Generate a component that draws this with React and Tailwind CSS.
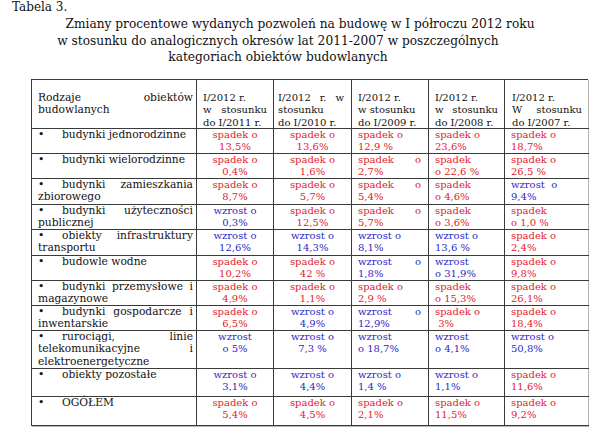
import React from "react";

const R = "text-[#e2222b]";
const B = "text-[#2a2ac8]";

function Lines({ lines, align = "left" }) {
  return (
    <div className={align === "center" ? "text-center" : "text-left"}>
      {lines.map((l, i) => {
        if (typeof l === "object" && l.j) {
          const words = l.t.split(" ");
          return (
            <div key={i} className="flex justify-between whitespace-pre">
              {words.map((w, k) => (
                <span key={k}>{w}</span>
              ))}
            </div>
          );
        }
        return (
          <div key={i} className="whitespace-pre">
            {l}
          </div>
        );
      })}
    </div>
  );
}

function NameCell({ first, rest = [], justify = false }) {
  return (
    <div className="pl-[6px] pr-[3px] border-r border-b border-[#3a3a3a] text-[#111] text-[10.7px]">
      <div className="flex">
        <span className="w-[24px] shrink-0">•</span>
        {justify ? (
          <span className="flex-1 flex justify-between">
            {first.split(" ").map((w, k) => (
              <span key={k}>{w}</span>
            ))}
          </span>
        ) : (
          <span className="whitespace-pre">{first}</span>
        )}
      </div>
      {rest.map((r, i) =>
        typeof r === "object" ? (
          <div key={i} className="flex justify-between">
            {r.t.split(" ").map((w, k) => (
              <span key={k}>{w}</span>
            ))}
          </div>
        ) : (
          <div key={i}>{r}</div>
        )
      )}
    </div>
  );
}

function Cell({ c, lines, align = "left", last = false }) {
  return (
    <div
      className={`border-b border-[#3a3a3a] ${last ? "" : "border-r"} ${
        align === "center" ? "px-[2px]" : "pl-[6px] pr-[7px]"
      } ${c}`}
    >
      <Lines lines={lines} align={align} />
    </div>
  );
}

const rows = [
  {
    name: { first: "budynki jednorodzinne" },
    cells: [
      [R, ["spadek o", "13,5%"]],
      [R, ["spadek o", "13,6%"]],
      [R, ["spadek o", "12,9 %"]],
      [R, ["spadek o", "23,6%"]],
      [R, ["spadek o", "18,7%"]],
    ],
  },
  {
    name: { first: "budynki wielorodzinne" },
    cells: [
      [R, ["spadek o", "0,4%"]],
      [R, ["spadek o", "1,6%"]],
      [R, [{ j: true, t: "spadek o" }, "2,7%"]],
      [R, ["spadek", "o 22,6 %"]],
      [R, ["spadek o", "26,5 %"]],
    ],
  },
  {
    name: { first: "budynki zamieszkania", rest: ["zbiorowego"], justify: true },
    cells: [
      [R, ["spadek o", "8,7%"]],
      [R, ["spadek o", "5,7%"]],
      [R, [{ j: true, t: "spadek o" }, "5,4%"]],
      [R, ["spadek", "o 4,6%"]],
      [B, ["wzrost  o", "9,4%"]],
    ],
  },
  {
    name: { first: "budynki użyteczności", rest: ["publicznej"], justify: true },
    cells: [
      [B, ["wzrost o", "0,3%"]],
      [R, ["spadek o", "12,5%"]],
      [R, [{ j: true, t: "spadek o" }, "5,7%"]],
      [R, ["spadek", "o 3,6%"]],
      [R, ["spadek", "o 1,0 %"]],
    ],
  },
  {
    name: { first: "obiekty infrastruktury", rest: ["transportu"], justify: true },
    cells: [
      [B, ["wzrost o", "12,6%"]],
      [B, ["wzrost o", "14,3%"]],
      [B, ["wzrost o", "8,1%"]],
      [B, ["wzrost o", "13,6 %"]],
      [R, ["spadek o", "2,4%"]],
    ],
  },
  {
    name: { first: "budowle wodne" },
    cells: [
      [R, ["spadek o", "10,2%"]],
      [R, ["spadek o", "42 %"]],
      [B, [{ j: true, t: "wzrost o" }, "1,8%"]],
      [B, ["wzrost", "o 31,9%"]],
      [R, ["spadek o", "9,8%"]],
    ],
  },
  {
    name: { first: "budynki przemysłowe i", rest: ["magazynowe"], justify: true },
    cells: [
      [R, ["spadek o", "4,9%"]],
      [R, ["spadek o", "1,1%"]],
      [R, ["spadek o", "2,9 %"]],
      [R, ["spadek", "o 15,3%"]],
      [R, ["spadek o", "26,1%"]],
    ],
  },
  {
    name: { first: "budynki gospodarcze i", rest: ["inwentarskie"], justify: true },
    cells: [
      [R, ["spadek o", "6,5%"]],
      [B, ["wzrost o", "4,9%"]],
      [B, [{ j: true, t: "wzrost o" }, "12,9%"]],
      [R, ["spadek o", " 3%"]],
      [R, ["spadek o", "18,4%"]],
    ],
  },
  {
    name: {
      first: "rurociągi, linie",
      rest: [{ t: "telekomunikacyjne i" }, "elektroenergetyczne"],
      justify: true,
    },
    cells: [
      [B, ["wzrost", "o 5%"]],
      [B, ["wzrost o", "7,3 %"]],
      [B, ["wzrost", "o 18,7%"]],
      [B, ["wzrost", "o 4,1%"]],
      [B, ["wzrost o", "50,8%"]],
    ],
  },
  {
    name: { first: "obiekty pozostałe" },
    cells: [
      [B, ["wzrost o", "3,1%"]],
      [B, ["wzrost o", "4,4%"]],
      [B, ["wzrost o", "1,4 %"]],
      [B, ["wzrost o", "1,1%"]],
      [R, ["spadek o", "11,6%"]],
    ],
  },
  {
    name: { first: "OGÓŁEM" },
    cells: [
      [R, ["spadek o", "5,4%"]],
      [R, ["spadek o", "4,5%"]],
      [R, ["spadek o", "2,1%"]],
      [R, ["spadek o", "11,5%"]],
      [R, ["spadek o", "9,2%"]],
    ],
  },
];

export default function App() {
  return (
    <div
      className="w-[600px] h-[436px] bg-white text-[#111] overflow-hidden"
      style={{ fontFamily: '"DejaVu Serif", serif' }}
    >
      <div className="pl-[12px] text-[12px] leading-[14px]">Tabela 3.</div>
      <div className="w-[556px] text-center text-[12.2px] leading-[16.5px] mt-[2px]">
        <div className="pl-[44px]">
          Zmiany procentowe wydanych pozwoleń na budowę w I półroczu 2012 roku
        </div>
        <div>w stosunku do analogicznych okresów lat 2011-2007 w poszczególnych</div>
        <div>kategoriach obiektów budowlanych</div>
      </div>
      <div className="ml-[31px] mt-[13px] w-[557px] border-l border-t border-[#3a3a3a] shadow-[1px_1px_0_#b5b5b5] grid grid-cols-[165px_77px_78px_77px_76px_84px] grid-rows-[49px_25px_25px_26px_25px_26px_25px_25px_25px_38px_28px_29px] text-[10px] leading-[12.5px]">
        <div className="pl-[6px] pr-[3px] pt-[12px] border-r border-b border-[#3a3a3a] text-[10.7px]">
          <Lines lines={[{ j: true, t: "Rodzaje obiektów" }, "budowlanych"]} />
        </div>
        <div className="pl-[6px] pr-[6px] pt-[12px] border-r border-b border-[#3a3a3a]">
          <Lines lines={["I/2012 r.", { j: true, t: "w stosunku" }, "do I/2011 r."]} />
        </div>
        <div className="pl-[4px] pr-[7px] pt-[12px] border-r border-b border-[#3a3a3a]">
          <Lines lines={[{ j: true, t: "I/2012 r. w" }, "stosunku", "do I/2010 r."]} />
        </div>
        <div className="pl-[6px] pr-[6px] pt-[12px] border-r border-b border-[#3a3a3a]">
          <Lines lines={["I/2012 r.", "w stosunku", "do I/2009 r."]} />
        </div>
        <div className="pl-[6px] pr-[6px] pt-[12px] border-r border-b border-[#3a3a3a]">
          <Lines lines={["I/2012 r.", { j: true, t: "w stosunku" }, "do I/2008 r."]} />
        </div>
        <div className="pl-[7px] pr-[7px] pt-[12px] border-b border-[#3a3a3a]">
          <Lines lines={["I/2012 r.", { j: true, t: "W stosunku" }, "do I/2007 r."]} />
        </div>
        {rows.map((row, ri) => (
          <React.Fragment key={ri}>
            <NameCell {...row.name} />
            {row.cells.map(([c, lines], ci) => (
              <Cell
                key={ci}
                c={c}
                lines={lines}
                align={ci < 2 ? "center" : "left"}
                last={ci === 4}
              />
            ))}
          </React.Fragment>
        ))}
      </div>
    </div>
  );
}
